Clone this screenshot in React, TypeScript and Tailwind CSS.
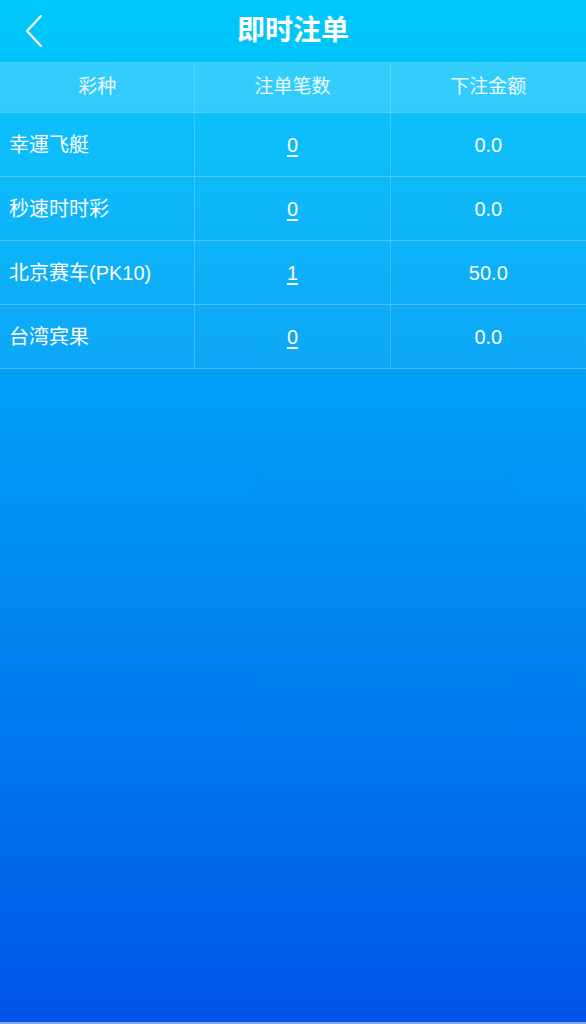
const rows = [
  { name: "幸運飞艇", count: "0", amount: "0.0" },
  { name: "秒速时时彩", count: "0", amount: "0.0" },
  { name: "北京赛车(PK10)", count: "1", amount: "50.0" },
  { name: "台湾宾果", count: "0", amount: "0.0" },
];

export default function App() {
  return (
    <div
      className="flex h-[1024px] w-[586px] flex-col bg-gradient-to-b from-[#00c9fb] to-[#0053e8] text-white"
      style={{ fontFamily: '"Liberation Sans", "Noto Sans CJK SC", sans-serif' }}
    >
      <header className="relative flex h-[63px] items-center justify-center border-b border-white/25">
        <button className="absolute left-[22px] top-[12px] flex h-[38px] w-[24px] items-center justify-center">
          <svg width="20" height="34" viewBox="0 0 20 34" fill="none">
            <path d="M17 2 L3 17 L17 32" stroke="white" strokeWidth="2.2" strokeLinecap="round" strokeLinejoin="round" />
          </svg>
        </button>
        <h1 className="text-[28px] font-bold">即时注单</h1>
      </header>

      <div className="grid h-[49px] grid-cols-3 bg-white/20 text-[19px] text-white/90">
        <div className="flex items-center justify-center border-r border-white/20">彩种</div>
        <div className="flex items-center justify-center border-r border-white/20">注单笔数</div>
        <div className="flex items-center justify-center">下注金额</div>
      </div>

      {rows.map((row) => (
        <div key={row.name} className="grid h-[64px] grid-cols-3 border-t border-white/25 bg-white/5 text-[20px]">
          <div className="flex items-center border-r border-white/20 pl-[9px]">{row.name}</div>
          <div className="flex items-center justify-center border-r border-white/20">
            <span className="underline underline-offset-[3px]">{row.count}</span>
          </div>
          <div className="flex items-center justify-center">{row.amount}</div>
        </div>
      ))}
      <div className="border-t border-white/25" />

      <div className="flex-1" />
      <div className="h-[2px] bg-white/50" />
    </div>
  );
}
